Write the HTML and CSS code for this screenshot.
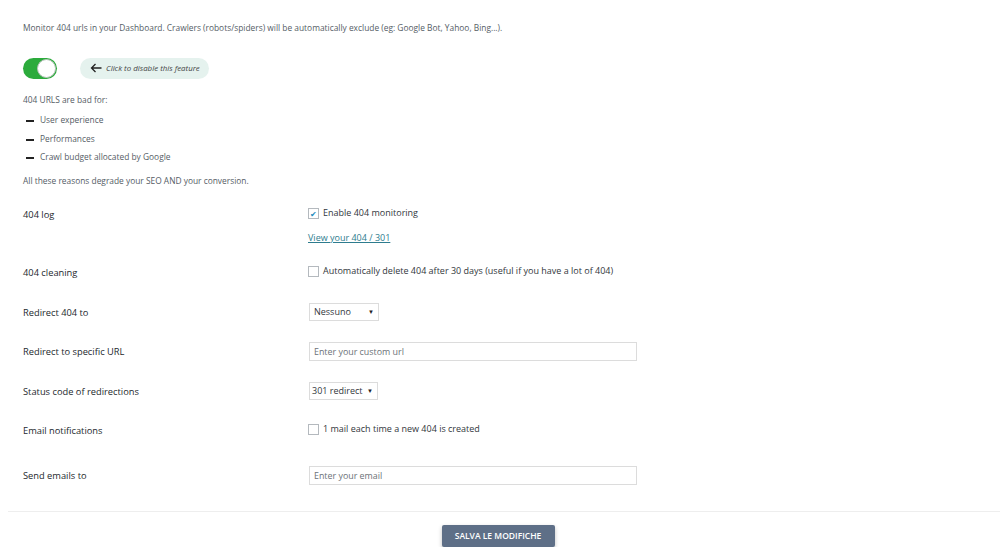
FILE: index.html
```html
<!DOCTYPE html>
<html lang="en">
<head>
  <meta charset="UTF-8" />
  <title>404 monitoring</title>
  <link rel="stylesheet" href="styles.css">
</head>
<body>

  <div class="intro">
    <p class="lead">Monitor 404 urls in your Dashboard. Crawlers (robots/spiders) will be automatically exclude (eg: Google Bot, Yahoo, Bing...).</p>

    <div class="toggle-line">
      <span class="toggle"><span class="knob"></span></span>
      <span class="hint">
        <svg class="arrow" width="12" height="10" viewBox="0 0 12 10"><path d="M11.5 5H1.5M5.5 1L1.5 5L5.5 9" fill="none" stroke="#222" stroke-width="1.3"/></svg>
        Click to disable this feature
      </span>
    </div>

    <p class="small first">404 URLS are bad for:</p>
    <ul class="dash-list">
      <li>User experience</li>
      <li>Performances</li>
      <li>Crawl budget allocated by Google</li>
    </ul>
    <p class="small last">All these reasons degrade your SEO AND your conversion.</p>
  </div>

  <div class="settings">
    <div class="row row-log">
      <div class="label">404 log</div>
      <div class="field">
        <label class="check"><span class="box checked">&#10004;</span> Enable 404 monitoring</label>
        <a href="#" class="link">View your 404 / 301</a>
      </div>
    </div>

    <div class="row">
      <div class="label">404 cleaning</div>
      <div class="field">
        <label class="check"><span class="box"></span> Automatically delete 404 after 30 days (useful if you have a lot of 404)</label>
      </div>
    </div>

    <div class="row">
      <div class="label">Redirect 404 to</div>
      <div class="field">
        <div class="select select-none">Nessuno <span class="caret">&#9660;</span></div>
      </div>
    </div>

    <div class="row">
      <div class="label">Redirect to specific URL</div>
      <div class="field">
        <input type="text" class="text-input" placeholder="Enter your custom url">
      </div>
    </div>

    <div class="row">
      <div class="label">Status code of redirections</div>
      <div class="field">
        <div class="select select-code">301 redirect <span class="caret">&#9660;</span></div>
      </div>
    </div>

    <div class="row row-mail">
      <div class="label">Email notifications</div>
      <div class="field">
        <label class="check"><span class="box"></span> 1 mail each time a new 404 is created</label>
      </div>
    </div>

    <div class="row">
      <div class="label">Send emails to</div>
      <div class="field">
        <input type="text" class="text-input" placeholder="Enter your email">
      </div>
    </div>
  </div>

  <div class="footer">
    <button class="save">SALVA LE MODIFICHE</button>
  </div>

</body>
</html>
```

FILE: styles.css
```css
html, body {
  margin: 0;
  padding: 0;
}

body {
  font-family: "Open Sans", sans-serif;
  font-size: 8.4px;
  color: #555d66;
  background: #fff;
}

.intro {
  padding: 22px 23px 0 23px;
}

p {
  margin: 0;
}

.lead {
  line-height: 12px;
}

.toggle-line {
  display: flex;
  align-items: center;
  margin-top: 23px;
  height: 22px;
}

.toggle {
  position: relative;
  width: 34px;
  height: 21px;
  border-radius: 11px;
  background: #2cab3c;
}

.toggle .knob {
  position: absolute;
  right: 1px;
  top: 1px;
  width: 17px;
  height: 17px;
  border-radius: 50%;
  background: #fff;
  border: 1px solid #b9c4bc;
}

.hint {
  display: flex;
  align-items: center;
  margin-left: 23px;
  height: 21px;
  padding: 0 9px 0 10px;
  border-radius: 11px;
  background: #e5f2ee;
  font-style: italic;
  font-size: 7.9px;
  color: #444;
}

.hint .arrow {
  margin-right: 4px;
}

.small {
  line-height: 12px;
}

.small.first {
  margin-top: 15px;
}

.dash-list {
  list-style: none;
  margin: 8px 0 0 0;
  padding: 0;
}

.dash-list li {
  position: relative;
  padding-left: 17px;
  line-height: 12px;
  margin-bottom: 6.5px;
}

.dash-list li::before {
  content: "";
  position: absolute;
  left: 3px;
  top: 6px;
  width: 8px;
  height: 2px;
  background: #222;
}

.small.last {
  margin-top: 12px;
}

.settings {
  padding: 20px 23px 0 23px;
}

.row {
  display: flex;
  align-items: flex-start;
  height: 39.5px;
}

.row-log {
  height: 58px;
}

.row-mail {
  height: 45px;
}

.label {
  width: 285px;
  padding-top: 2px;
  font-size: 9.3px;
  color: #23282d;
  line-height: 12px;
}

.field {
  display: flex;
  flex-direction: column;
  align-items: flex-start;
}

.check {
  display: flex;
  align-items: center;
  line-height: 12px;
  font-size: 9px;
  color: #32373c;
}

.box {
  display: inline-block;
  width: 9px;
  height: 9px;
  border: 1px solid #b4b9be;
  margin-right: 4px;
  background: #fff;
  font-size: 8px;
  line-height: 9px;
  text-align: center;
  color: #1e8cbe;
}

.link {
  margin-top: 13px;
  font-size: 9px;
  color: #2e7c8e;
  text-decoration: underline;
  line-height: 12px;
}

.select {
  margin: -2px 0 0 1px;
  border: 1px solid #dcdcdc;
  padding: 0 4px;
  font-size: 9px;
  color: #32373c;
  box-sizing: border-box;
  display: flex;
  justify-content: space-between;
}

.select-none {
  width: 70px;
  height: 18px;
  line-height: 16px;
}

.select-code {
  width: 69px;
  height: 18px;
  line-height: 16px;
  padding-left: 2px;
}

.caret {
  font-size: 6px;
  color: #222;
}

.text-input {
  margin: -2px 0 0 1px;
  width: 328px;
  height: 19px;
  box-sizing: border-box;
  border: 1px solid #dcdcdc;
  padding: 0 4px;
  font-family: "Open Sans", sans-serif;
  font-size: 8.9px;
  color: #32373c;
  outline: none;
}

.text-input::placeholder {
  color: #6c7278;
}

.footer {
  margin-left: 8px;
  border-top: 1.5px solid #eeeeee;
  margin-top: 3px;
  padding: 13px 12px 0 0;
  display: flex;
  justify-content: center;
}

.save {
  width: 113px;
  height: 22px;
  border: none;
  border-radius: 2px;
  background: #5e6f87;
  color: #fff;
  font-family: "Open Sans", sans-serif;
  font-size: 8.5px;
  font-weight: 600;
  box-shadow: 0 2px 4px rgba(0, 0, 0, 0.25);
  cursor: pointer;
}
```
